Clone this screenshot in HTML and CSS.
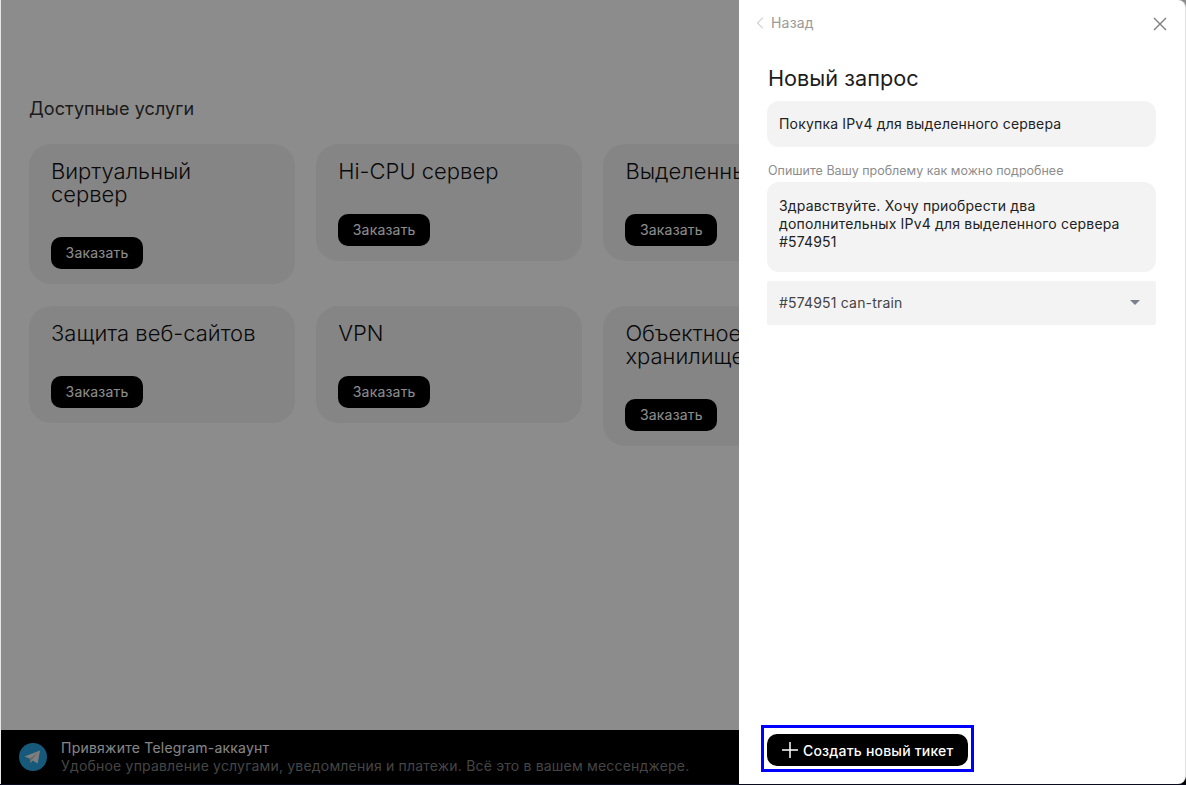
FILE: index.html
```html
<!DOCTYPE html>
<html lang="ru">
<head>
<meta charset="utf-8">
<title>Новый запрос</title>
<link rel="stylesheet" href="styles.css">
</head>
<body>
<div class="frame">
  <div class="app">
    <main class="main">
      <h2 class="section-title">Доступные услуги</h2>
      <div class="grid">
        <section class="card"><h3>Виртуальный<br>сервер</h3><button class="order">Заказать</button></section>
        <section class="card"><h3>Hi-CPU сервер</h3><button class="order">Заказать</button></section>
        <section class="card"><h3>Выделенный сервер</h3><button class="order">Заказать</button></section>
        <section class="card"><h3>Защита веб-сайтов</h3><button class="order">Заказать</button></section>
        <section class="card"><h3>VPN</h3><button class="order">Заказать</button></section>
        <section class="card"><h3>Объектное<br>хранилище</h3><button class="order">Заказать</button></section>
      </div>
    </main>
    <div class="tg-bar">
      <svg class="tg-icon" viewBox="0 0 28 28" width="28" height="28">
        <circle cx="14" cy="14" r="14" fill="#2aa3e0"/>
        <path d="M5.5 13.6 21 7.4 18.6 20.6 13.8 17.4 11.4 19.9 10.8 15.6Z" fill="#e6e6e6"/>
        <path d="M10.8 15.6 18.4 10.2 13 16.6 11.4 19.9Z" fill="#bdbdbd"/>
      </svg>
      <div class="tg-text">
        <div class="tg-head">Привяжите Telegram-аккаунт</div>
        <div class="tg-sub">Удобное управление услугами, уведомления и платежи. Всё это в вашем мессенджере.</div>
      </div>
    </div>
    <div class="overlay"></div>
  </div>

  <aside class="drawer">
    <div class="drawer-top">
      <span class="back">
        <svg viewBox="0 0 8 12" width="8" height="12"><path d="M6.8 .8 1.4 6l5.4 5.2" fill="none" stroke="#d4d4d4" stroke-width="1.2"/></svg>
        Назад
      </span>
      <svg class="close" viewBox="0 0 14 14" width="14" height="14"><path d="M1 1l12 12M13 1 1 13" fill="none" stroke="#7d7d7d" stroke-width="1.4"/></svg>
    </div>
    <div class="drawer-body">
      <h1 class="drawer-title">Новый запрос</h1>
      <div class="field subject">Покупка IPv4 для выделенного сервера</div>
      <div class="hint">Опишите Вашу проблему как можно подробнее</div>
      <div class="field message">Здравствуйте. Хочу приобрести два<br>дополнительных IPv4 для выделенного сервера<br>#574951</div>
      <div class="select">
        <span>#574951 can-train</span>
        <svg class="caret" viewBox="0 0 10 5" width="10" height="5"><path d="M0 0h10L5 5Z" fill="#7a818c"/></svg>
      </div>
    </div>
    <div class="drawer-foot">
      <div class="highlight">
        <button class="create">
          <svg viewBox="0 0 16 16" width="16" height="16"><path d="M8 0v16M0 8h16" stroke="#fff" stroke-width="1.5"/></svg>
          Создать новый тикет
        </button>
      </div>
    </div>
  </aside>
</div>
</body>
</html>
```

FILE: styles.css
```css
* { box-sizing: border-box; }
html, body { margin: 0; height: 100%; }
body {
  background: #0b0b1e;
  font-family: Inter, "Noto Sans", sans-serif;
  overflow: hidden;
}
.frame {
  position: relative;
  height: 784px;
  overflow: hidden;
}
.app {
  position: relative;
  height: 784px;
  display: flex;
  flex-direction: column;
  background: #fff;
  border-left: 1px solid #e6e6e6;
  overflow: hidden;
}
.main {
  flex: 1;
  padding: 98px 0 0 28px;
}
.section-title {
  margin: 0 0 24px;
  font-size: 18px;
  line-height: 22px;
  font-weight: 400;
  letter-spacing: .1px;
  color: #333;
}
.grid {
  display: grid;
  grid-template-columns: repeat(3, 266px);
  column-gap: 21.2px;
  row-gap: 22px;
  align-items: start;
}
.card {
  background: #f3f3f3;
  border-radius: 22px;
  padding: 16px 22px 14.6px;
}
.card h3 {
  margin: 0 0 30.6px;
  font-size: 22px;
  line-height: 23.4px;
  font-weight: 300;
  color: #111;
  white-space: nowrap;
}
.order {
  display: block;
  width: 92px;
  height: 32px;
  padding: 0;
  border: 0;
  border-radius: 10px;
  background: #000;
  color: #fff;
  font: 400 14px/32px Inter, sans-serif;
  letter-spacing: .2px;
}
.tg-bar {
  height: 54px;
  flex: none;
  background: #000;
  display: flex;
  align-items: center;
  gap: 14px;
  padding-left: 18px;
}
.tg-text { font-size: 14px; line-height: 18px; margin-top: -1px; }
.tg-head { color: #f2f2f2; letter-spacing: .23px; }
.tg-sub { color: #7f7f7f; letter-spacing: .19px; white-space: nowrap; }
.overlay {
  position: absolute;
  inset: 0;
  background: rgba(0, 0, 0, .45);
}
.drawer {
  position: absolute;
  top: 0;
  right: 0;
  bottom: 0;
  width: 447px;
  display: flex;
  flex-direction: column;
  background: #fff;
  border-right: 1px solid #e0e0e0;
  border-radius: 0 8px 8px 0;
}
.drawer-top {
  display: flex;
  justify-content: space-between;
  align-items: center;
  padding: 4px 18px 0 17px;
  height: 41px;
}
.back {
  display: flex;
  align-items: center;
  gap: 7px;
  font-size: 14px;
  letter-spacing: .2px;
  color: #9a9a9a;
}
.close { margin-top: 2px; }
.drawer-body {
  flex: 1;
  padding: 23px 29px 0 28px;
}
.drawer-title {
  margin: 0 0 9px;
  font-size: 21.7px;
  line-height: 28px;
  font-weight: 400;
  color: #1c1c1c;
  padding-left: 1px;
}
.field {
  background: #f3f3f3;
  border-radius: 12px;
  padding: 0 12px;
  font-size: 14px;
  line-height: 18px;
  color: #222;
  letter-spacing: .18px;
}
.subject { height: 46px; padding-top: 14px; }
.hint {
  margin: 16px 0 4px 1px;
  font-size: 12.5px;
  line-height: 15px;
  color: #8d8d8d;
}
.message { height: 90px; padding-top: 15px; }
.select {
  margin-top: 9px;
  height: 44px;
  background: #f3f3f3;
  border-radius: 2px;
  display: flex;
  align-items: center;
  justify-content: space-between;
  padding: 0 16px 2px 12px;
  font-size: 14px;
  letter-spacing: .18px;
  color: #444;
}
.drawer-foot { padding: 0 0 12px 22px; }
.highlight {
  display: inline-block;
  border: 3px solid #0000ff;
  padding: 6px 3px 3px;
}
.create {
  display: flex;
  align-items: center;
  gap: 5px;
  width: 201px;
  height: 32px;
  padding: 0 0 0 15px;
  border: 0;
  border-radius: 10px;
  background: #000;
  color: #fff;
  font: 500 14px Inter, sans-serif;
  letter-spacing: .2px;
  white-space: nowrap;
}
```
